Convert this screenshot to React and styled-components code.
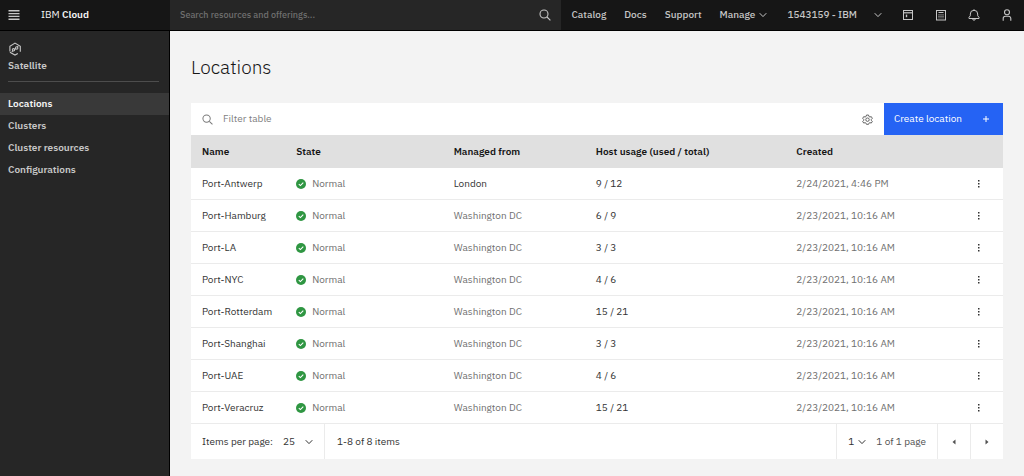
import { useState } from 'react'
import styled, { createGlobalStyle } from 'styled-components'

const navLinks = ['Catalog', 'Docs', 'Support']
const sideLinks = ['Locations', 'Clusters', 'Cluster resources', 'Configurations']

const locations = [
  { name: 'Port-Antwerp', from: 'London', usage: '9 / 12', created: '2/24/2021, 4:46 PM', dark: true },
  { name: 'Port-Hamburg', from: 'Washington DC', usage: '6 / 9', created: '2/23/2021, 10:16 AM' },
  { name: 'Port-LA', from: 'Washington DC', usage: '3 / 3', created: '2/23/2021, 10:16 AM' },
  { name: 'Port-NYC', from: 'Washington DC', usage: '4 / 6', created: '2/23/2021, 10:16 AM' },
  { name: 'Port-Rotterdam', from: 'Washington DC', usage: '15 / 21', created: '2/23/2021, 10:16 AM' },
  { name: 'Port-Shanghai', from: 'Washington DC', usage: '3 / 3', created: '2/23/2021, 10:16 AM' },
  { name: 'Port-UAE', from: 'Washington DC', usage: '4 / 6', created: '2/23/2021, 10:16 AM' },
  { name: 'Port-Veracruz', from: 'Washington DC', usage: '15 / 21', created: '2/23/2021, 10:16 AM' },
]

function MenuIcon() {
  return (
    <Icon width="12" height="12" viewBox="0 0 12 12" strokeWidth="1.4">
      <path d="M0.5 1.8h11M0.5 4.6h11M0.5 7.4h11M0.5 10.2h11" />
    </Icon>
  )
}

function SearchIcon({ size = 12 }) {
  return (
    <Icon width={size} height={size} viewBox="0 0 12 12" strokeWidth="1.1">
      <circle cx="5" cy="5" r="4" />
      <path d="M8 8l3.4 3.4" />
    </Icon>
  )
}

function SatelliteIcon() {
  return (
    <Icon width="14" height="14" viewBox="0 0 14 14" strokeWidth="1.1">
      <path d="M1.9 9.4V4.2L7 1.1l5.3 3.1v5.6M1.9 10.2L7 13l2.8-1.6" />
      <path d="M3.8 10l1.2-1.4M6.4 7.6l1.6-1.2M9.2 5.2l1-1.2" />
      <circle cx="5.5" cy="7.8" r="1.2" />
      <circle cx="8.7" cy="6" r="1.2" />
    </Icon>
  )
}

function ChevronIcon() {
  return (
    <Icon width="8" height="8" viewBox="0 0 8 8" strokeWidth="1">
      <path d="M0.7 2.2L4 5.6l3.3-3.4" />
    </Icon>
  )
}

function CatalogIcon() {
  return (
    <Icon width="12" height="12" viewBox="0 0 12 12" strokeWidth="1">
      <rect x="1.5" y="1.5" width="9" height="9" />
      <path d="M1.5 3.8h9" strokeWidth="1.2" />
      <path d="M4.5 5.6v2.6" strokeWidth="1.4" />
    </Icon>
  )
}

function CalculatorIcon() {
  return (
    <Icon width="12" height="12" viewBox="0 0 12 12" strokeWidth="1">
      <rect x="1.5" y="1.5" width="9" height="9.5" />
      <path d="M3.5 3.5h5" />
      <path d="M4 5.2v4.2M6 5.2v4.2M8 5.2v4.2" strokeWidth="0.9" strokeDasharray="1.2 0.4" />
    </Icon>
  )
}

function BellIcon() {
  return (
    <Icon width="12" height="12" viewBox="0 0 12 12" strokeWidth="1">
      <path d="M6 0.3v1M1 9.5h10V8.3L9.7 6.8V5a3.7 3.7 0 0 0-7.4 0v1.8L1 8.3zM4.6 9.6a1.4 1.6 0 0 0 2.8 0" />
    </Icon>
  )
}

function UserIcon() {
  return (
    <Icon width="12" height="12" viewBox="0 0 12 12" strokeWidth="1.1">
      <circle cx="6" cy="3.2" r="2.5" />
      <path d="M2.2 11.8V9.6a2.3 2.3 0 0 1 2.3-2.3h3a2.3 2.3 0 0 1 2.3 2.3v2.2" />
    </Icon>
  )
}

function SettingsIcon() {
  return (
    <Icon width="11" height="11" viewBox="0 0 32 32" strokeWidth="2.6">
      <path d="M13 3h6l1 4 3 1.8 4-1.2 3 5-3 3v2.8l3 3-3 5-4-1.2L20 27l-1 3h-6l-1-3-3-1.8-4 1.2-3-5 3-3v-2.8l-3-3 3-5 4 1.2L12 7z" />
      <circle cx="16" cy="16.5" r="5" />
    </Icon>
  )
}

function CheckIcon() {
  return (
    <svg width="10" height="10" viewBox="0 0 10 10" aria-hidden="true">
      <circle cx="5" cy="5" r="5" fill="#2f9642" />
      <path d="M2.8 5.1l1.6 1.5 2.9-2.9" fill="none" stroke="#fff" strokeWidth="1.1" />
    </svg>
  )
}

function OverflowIcon() {
  return (
    <svg width="8" height="10" viewBox="0 0 8 10" fill="currentColor" aria-hidden="true">
      <rect x="3" y="1" width="1.5" height="1.5" />
      <rect x="3" y="4" width="1.5" height="1.5" />
      <rect x="3" y="7" width="1.5" height="1.5" />
    </svg>
  )
}

function CaretIcon({ next }) {
  return (
    <svg width="6" height="6" viewBox="0 0 6 6" fill="currentColor" aria-hidden="true">
      <path d={next ? 'M1.5 0.5v5L4.5 3z' : 'M4.5 0.5v5L1.5 3z'} />
    </svg>
  )
}

function Header() {
  return (
    <TopBar>
      <Brand>
        <IconButton aria-label="Menu"><MenuIcon /></IconButton>
        <BrandLink href="#home">IBM <b>Cloud</b></BrandLink>
      </Brand>
      <GlobalSearch>
        <SearchInput type="search" aria-label="Search" placeholder="Search resources and offerings..." />
        <IconButton aria-label="Submit search"><SearchIcon /></IconButton>
      </GlobalSearch>
      <Nav>
        {navLinks.map((link) => (
          <NavLink key={link} href={`#${link.toLowerCase()}`}>{link}</NavLink>
        ))}
        <NavButton $gap={4}>Manage <ChevronIcon /></NavButton>
      </Nav>
      <NavButton $gap={17}>1543159 - IBM <ChevronIcon /></NavButton>
      <Actions>
        <IconButton aria-label="Shell"><CatalogIcon /></IconButton>
        <IconButton aria-label="Cost estimator"><CalculatorIcon /></IconButton>
        <IconButton aria-label="Notifications"><BellIcon /></IconButton>
        <IconButton aria-label="Profile"><UserIcon /></IconButton>
      </Actions>
    </TopBar>
  )
}

function Sidebar() {
  const [active, setActive] = useState('Locations')
  return (
    <Side>
      <Product>
        <SatelliteIcon />
        Satellite
      </Product>
      {sideLinks.map((link) => (
        <SideLink key={link} href="#" $active={link === active} onClick={() => setActive(link)}>
          {link}
        </SideLink>
      ))}
    </Side>
  )
}

function LocationsTable({ rows }) {
  return (
    <Table>
      <colgroup>
        <Column $width="11.6%" />
        <Column $width="19.4%" />
        <Column $width="17.5%" />
        <Column $width="24.7%" />
        <Column />
        <Column $width="48px" />
      </colgroup>
      <thead>
        <tr>
          <Th>Name</Th>
          <Th>State</Th>
          <Th>Managed from</Th>
          <Th>Host usage (used / total)</Th>
          <Th>Created</Th>
          <Th aria-label="Actions" />
        </tr>
      </thead>
      <tbody>
        {rows.map((row) => (
          <tr key={row.name}>
            <Td $dark>{row.name}</Td>
            <Td><State><CheckIcon />Normal</State></Td>
            <Td $dark={row.dark}>{row.from}</Td>
            <Td $dark>{row.usage}</Td>
            <Td>{row.created}</Td>
            <Td $dark $center>
              <IconButton aria-label={`Options for ${row.name}`}><OverflowIcon /></IconButton>
            </Td>
          </tr>
        ))}
      </tbody>
    </Table>
  )
}

function Pagination() {
  return (
    <Footer>
      <FooterCell>
        <label htmlFor="page-size">Items per page:</label>
        <SelectWrap $width={30}>
          <Select id="page-size" defaultValue="25">
            <option>25</option>
            <option>50</option>
          </Select>
          <ChevronIcon />
        </SelectWrap>
      </FooterCell>
      <FooterText>1-8 of 8 items</FooterText>
      <FooterCell $end>
        <SelectWrap $width={18}>
          <Select aria-label="Page number" defaultValue="1">
            <option>1</option>
          </Select>
          <ChevronIcon />
        </SelectWrap>
        <Muted>1 of 1 page</Muted>
      </FooterCell>
      <PageButton aria-label="Previous page"><CaretIcon /></PageButton>
      <PageButton aria-label="Next page"><CaretIcon next /></PageButton>
    </Footer>
  )
}

function App() {
  const [filter, setFilter] = useState('')
  const rows = locations.filter((row) => row.name.toLowerCase().includes(filter.toLowerCase()))

  return (
    <>
      <GlobalStyle />
      <Page>
        <Header />
        <Body>
          <Sidebar />
          <Main>
            <Title>Locations</Title>
            <Toolbar>
              <FilterLabel>
                <SearchIcon size={11} />
                <FilterInput
                  aria-label="Filter table"
                  placeholder="Filter table"
                  value={filter}
                  onChange={(e) => setFilter(e.target.value)}
                />
              </FilterLabel>
              <SettingsButton aria-label="Settings"><SettingsIcon /></SettingsButton>
              <CreateButton>
                Create location
                <Icon width="6" height="6" viewBox="0 0 6 6" strokeWidth="1">
                  <path d="M3 0v6M0 3h6" />
                </Icon>
              </CreateButton>
            </Toolbar>
            <LocationsTable rows={rows} />
            <Pagination />
          </Main>
        </Body>
      </Page>
    </>
  )
}

export default App

const GlobalStyle = createGlobalStyle`
  * {
    box-sizing: border-box;
  }

  body {
    margin: 0;
    background: #f3f3f3;
    color: #333;
    font-family: 'IBM Plex Sans', 'Noto Sans', sans-serif;
    font-size: 10px;
    line-height: 14px;
  }

  button, input, select {
    font: inherit;
    color: inherit;
    border: 0;
    padding: 0;
    background: none;
  }

  button {
    cursor: pointer;
  }
`

const Icon = styled.svg.attrs({ 'aria-hidden': true })`
  fill: none;
  stroke: currentColor;
  flex-shrink: 0;
`

const Page = styled.div`
  display: flex;
  flex-direction: column;
  min-height: 100vh;
`

const TopBar = styled.header`
  display: flex;
  align-items: stretch;
  height: 31px;
  background: #161616;
  border-bottom: 1px solid #000;
  color: #c6c6c6;
  font-weight: 500;
`

const Brand = styled.div`
  display: flex;
  align-items: center;
  gap: 21px;
  width: 170px;
  padding-left: 8px;
`

const BrandLink = styled.a`
  color: #f4f4f4;
  font-weight: 400;
  text-decoration: none;

  b {
    font-weight: 600;
  }
`

const IconButton = styled.button`
  display: inline-flex;
  align-items: center;
  justify-content: center;
  vertical-align: middle;
`

const GlobalSearch = styled.div`
  display: flex;
  flex: 1;
  align-items: center;
  padding: 0 10px;
  background: #262626;
`

const SearchInput = styled.input`
  flex: 1;
  min-width: 0;
  outline: none;
  appearance: none;
  font-size: 9px;

  &::placeholder {
    color: #6f6f6f;
    opacity: 1;
  }
`

const Nav = styled.nav`
  display: flex;
  align-items: center;
  gap: 18px;
  padding: 0 20px 0 11px;
`

const NavLink = styled.a`
  color: inherit;
  text-decoration: none;
`

const NavButton = styled.button`
  display: flex;
  align-items: center;
  gap: ${({ $gap }) => $gap}px;
`

const Actions = styled.div`
  display: flex;
  align-items: center;
  gap: 21px;
  padding: 0 11px 0 20px;
`

const Body = styled.div`
  display: flex;
  flex: 1;
`

const Side = styled.aside`
  flex: 0 0 170px;
  background: #262626;
  border-right: 1px solid #000;
  color: #c6c6c6;
  font-weight: 600;
`

const Product = styled.div`
  display: flex;
  flex-direction: column;
  gap: 3px;
  margin: 0 10px 11px 8px;
  padding: 11px 0 8px;
  border-bottom: 1px solid #4d4d4d;
`

const SideLink = styled.a`
  display: block;
  padding: 4px 8px;
  background: ${({ $active }) => ($active ? '#393939' : 'transparent')};
  color: ${({ $active }) => ($active ? '#f4f4f4' : 'inherit')};
  text-decoration: none;
`

const Main = styled.main`
  flex: 1;
  min-width: 0;
  padding: 24px 21px 17px;
`

const Title = styled.h1`
  margin: 0 0 24px;
  color: #161616;
  font-size: 19px;
  font-weight: 300;
  line-height: 24px;
`

const Toolbar = styled.div`
  display: flex;
  height: 32px;
  background: #fff;
`

const FilterLabel = styled.label`
  display: flex;
  flex: 1;
  align-items: center;
  gap: 10px;
  padding-left: 11px;
  color: #7a7a7a;
`

const FilterInput = styled.input`
  flex: 1;
  outline: none;

  &::placeholder {
    color: #7f7f7f;
    opacity: 1;
  }
`

const SettingsButton = styled(IconButton)`
  width: 34px;
  color: #525252;
`

const CreateButton = styled.button`
  display: flex;
  align-items: center;
  justify-content: space-between;
  width: 119px;
  padding: 0 14px 0 10px;
  background: #2563f4;
  color: #fff;
`

const Table = styled.table`
  width: 100%;
  table-layout: fixed;
  border-collapse: separate;
  border-spacing: 0;
  background: #fff;
`

const Column = styled.col`
  width: ${({ $width }) => $width || 'auto'};
`

const Th = styled.th`
  height: 33px;
  padding: 0 0 0 11px;
  background: #e0e0e0;
  color: #161616;
  font-weight: 600;
  text-align: left;
`

const Td = styled.td`
  height: 32px;
  padding: ${({ $center }) => ($center ? '0' : '0 0 0 11px')};
  border-bottom: 1px solid #ebebeb;
  color: ${({ $dark }) => ($dark ? '#333' : '#6f6f6f')};
  text-align: ${({ $center }) => ($center ? 'center' : 'left')};
`

const State = styled.span`
  display: flex;
  align-items: center;
  gap: 6px;
`

const Footer = styled.div`
  display: flex;
  height: 35px;
  background: #fff;
`

const FooterCell = styled.div`
  display: flex;
  align-items: center;
  gap: 10px;
  padding: 0 11px;
  border-right: ${({ $end }) => ($end ? '0' : '1px solid #ebebeb')};
  border-left: ${({ $end }) => ($end ? '1px solid #ebebeb' : '0')};
`

const FooterText = styled.span`
  display: flex;
  flex: 1;
  align-items: center;
  padding-left: 12px;
`

const SelectWrap = styled.span`
  display: grid;
  align-items: center;
  width: ${({ $width }) => $width}px;

  > * {
    grid-area: 1 / 1;
  }

  svg {
    justify-self: end;
    pointer-events: none;
  }
`

const Select = styled.select`
  width: 100%;
  appearance: none;
  cursor: pointer;
`

const Muted = styled.span`
  color: #525252;
`

const PageButton = styled(IconButton)`
  width: 33px;
  border-left: 1px solid #ebebeb;
  color: #525252;
`
